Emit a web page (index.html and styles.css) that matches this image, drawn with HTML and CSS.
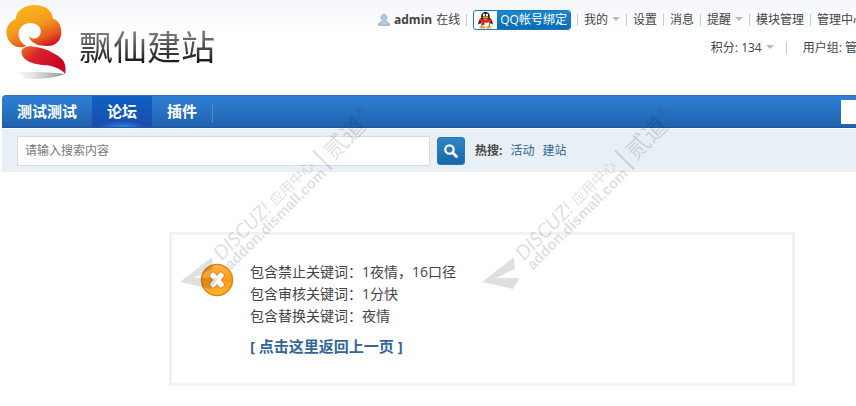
FILE: index.html
```
<!DOCTYPE html>
<html lang="zh">

<head>
  <meta charset="UTF-8">
  <meta name="viewport" content="width=device-width, initial-scale=1.0">
  <title>飘仙建站</title>
  <link rel="stylesheet" href="styles.css">
</head>

<body>
  <div class="wp">
    <!-- 头部 -->
    <header class="header">
      <a href="#" class="logo">
        <svg class="logo-mark" width="64" height="76" viewBox="12 9 192 228" aria-hidden="true">
          <defs>
            <linearGradient id="cloud" x1="0.2" y1="0" x2="0.75" y2="1">
              <stop offset="0" stop-color="#fbb91c" />
              <stop offset="0.5" stop-color="#f49a1e" />
              <stop offset="0.8" stop-color="#e4581d" />
              <stop offset="1" stop-color="#c8101f" />
            </linearGradient>
            <linearGradient id="tail" x1="0" y1="0" x2="0.9" y2="0.6">
              <stop offset="0" stop-color="#f0761c" />
              <stop offset="0.4" stop-color="#d8262a" />
              <stop offset="1" stop-color="#c80526" />
            </linearGradient>
            <linearGradient id="shade" x1="0" y1="0" x2="1" y2="0">
              <stop offset="0" stop-color="#ddd" stop-opacity="0" />
              <stop offset="1" stop-color="#888" />
            </linearGradient>
          </defs>
          <path d="M24 210C80 208 140 210 190 216C150 230 100 234 60 229C72 222 55 214 24 210Z" fill="url(#shade)" />
          <path d="M62 135C38 140 14 118 13 92C13 72 24 58 42 50C42 25 68 9 98 9C128 9 150 24 153 50C170 54 178 72 178 92C177 118 158 133 134 132C108 132 84 124 80 100C84 112 100 112 108 106C124 94 118 65 88 63C62 62 48 80 50 100C52 116 60 126 74 132Z" fill="url(#cloud)" />
          <path d="M86 133C70 133 58 140 58 150C62 180 100 188 135 190C160 194 180 204 190 216C192 190 190 175 165 160C145 148 130 138 86 133Z" fill="url(#tail)" />
        </svg>
        <span class="logo-text">飘仙建站</span>
      </a>

      <div class="um">
        <nav class="um-row">
          <span class="um-item user">
            <svg width="12" height="12" viewBox="0 0 12 12" aria-hidden="true">
              <path d="M6 0.5C8 0.5 9 2 8.700 4C8.500 5.500 8 6 7.500 6.600C8 8 11.500 8 11.500 11.300H0.500C0.500 8 4 8 4.500 6.600C4 6 3.500 5.500 3.300 4C3 2 4 0.500 6 0.500Z" fill="#b4cbe0" stroke="#8fadc9" />
            </svg>
            <a href="#" class="name">admin</a>
            <span>在线</span>
          </span>
          <span class="um-item">
            <a href="#" class="qq">
              <svg width="23" height="18" viewBox="0 0 23 18" aria-hidden="true">
                <ellipse cx="8.500" cy="16" rx="3" ry="1.500" fill="#f5a81c" />
                <ellipse cx="14.500" cy="16" rx="3" ry="1.500" fill="#f5a81c" />
                <path d="M11.500 1C15 1 16 3.500 15.800 7C19 10 19 13 18.500 13.500L16.500 12C16 15 14 16 11.500 16S7 15 6.500 12L4.500 13.500C4 13 4 10 7.200 7C7 3.500 8 1 11.500 1Z" fill="#222" />
                <ellipse cx="11.500" cy="12" rx="4" ry="4" fill="#fff" />
                <ellipse cx="10" cy="4" rx="1.100" ry="1.600" fill="#fff" />
                <ellipse cx="13" cy="4" rx="1.100" ry="1.600" fill="#fff" />
                <ellipse cx="11.500" cy="6.600" rx="3" ry="1" fill="#f5a81c" />
                <path d="M6 7Q11.500 10 17 7L18 10.500Q14 12 10.500 11.500V14H8V11L5 10Z" fill="#e2231a" />
              </svg>
              <span class="qq-label">QQ帐号绑定</span>
            </a>
          </span>
          <span class="um-item"><a href="#" class="drop">我的</a></span>
          <span class="um-item"><a href="#">设置</a></span>
          <span class="um-item"><a href="#">消息</a></span>
          <span class="um-item"><a href="#" class="drop">提醒</a></span>
          <span class="um-item"><a href="#">模块管理</a></span>
          <span class="um-item"><a href="#">管理中心</a></span>
        </nav>
        <div class="um-row um-credit">
          <span class="um-item"><a href="#" class="drop">积分: 134</a></span>
          <span class="um-item"><a href="#">用户组: 管</a></span>
        </div>
      </div>
    </header>

    <!-- 导航 -->
    <nav class="nav">
      <a href="#">测试测试</a>
      <a href="#" class="active">论坛</a>
      <a href="#" class="last">插件</a>
      <span class="quick"></span>
    </nav>

    <!-- 搜索栏 -->
    <form class="search">
      <input type="text" class="search-input" placeholder="请输入搜索内容" aria-label="请输入搜索内容">
      <button type="button" class="search-btn" aria-label="搜索">
        <svg width="14" height="14" viewBox="0 0 14 14" aria-hidden="true">
          <circle cx="5.500" cy="5.500" r="4.200" fill="none" stroke="#fff" stroke-width="2.200" />
          <path d="M8.500 8.500L12.500 12.500" stroke="#fff" stroke-width="2.800" stroke-linecap="round" />
        </svg>
      </button>
      <div class="hot">
        <strong>热搜:</strong>
        <a href="#">活动</a>
        <a href="#">建站</a>
      </div>
    </form>

    <!-- 提示信息 -->
    <main class="message">
      <svg class="message-icon" width="34" height="34" viewBox="0 0 34 34" aria-hidden="true">
        <defs>
          <linearGradient id="orange" x1="0" y1="0" x2="0" y2="1">
            <stop offset="0" stop-color="#f9b545" />
            <stop offset="0.5" stop-color="#f79a1c" />
            <stop offset="1" stop-color="#ffb52a" />
          </linearGradient>
        </defs>
        <circle cx="17" cy="17" r="15.500" fill="url(#orange)" stroke="#d9861c" stroke-width="1.500" />
        <path d="M13 12.500L21 21.500M21 12.500L13 21.500" stroke="#e08e20" stroke-width="7.500" stroke-linecap="round" />
        <path d="M13 12.500L21 21.500M21 12.500L13 21.500" stroke="#fff" stroke-width="5.500" stroke-linecap="round" />
      </svg>
      <div class="message-body">
        <p>包含禁止关键词：1夜情，16口径</p>
        <p>包含审核关键词：1分快</p>
        <p>包含替换关键词：夜情</p>
        <a href="#" class="back">[ 点击这里返回上一页 ]</a>
      </div>
    </main>

    <!-- 水印 -->
    <svg class="watermark watermark-left" width="200" height="200" viewBox="-3 -187 200 200">
      <g id="mark">
        <path d="M0 0L32-25L33-13L14-4L38-4L31 7Z" />
        <g transform="rotate(-45)">
          <text x="44" y="15" class="wm-brand">DISCUZ!</text>
          <text x="121" y="14" class="wm-center">应用中心</text>
          <text x="44" y="28" class="wm-url">addon.dismall.com</text>
          <path d="M186 1H188V28H186Z" />
          <text x="194" y="23" class="wm-name">贰道</text>
          <text x="244" y="9" class="wm-reg">®</text>
        </g>
      </g>
    </svg>
    <svg class="watermark watermark-right" width="200" height="200" viewBox="-3 -187 200 200">
      <use href="#mark" />
    </svg>
  </div>
</body>

</html>
```
FILE: styles.css
```
* {
  margin: 0;
  padding: 0;
  box-sizing: border-box;
}

body {
  font: 12px/20px "Open Sans", "Noto Sans CJK SC", sans-serif;
  color: #444;
  background: linear-gradient(#f4f6fa, #fff 32px) no-repeat #fff;
  padding: 0 2px;
  overflow-x: hidden;
}

a {
  color: #444;
  text-decoration: none;
}

.wp {
  position: relative;
  min-width: 960px;
  max-width: 1200px;
  margin: 0 auto;
}

/* 头部 */
.header {
  display: flex;
  justify-content: space-between;
  align-items: flex-start;
  height: 95px;
}

.logo {
  display: flex;
  padding: 5px 0 0 4px;
}

.logo-text {
  margin: 18px 0 0 9px;
  font-size: 34px;
  line-height: 48px;
  background: linear-gradient(#777 20%, #000 80%);
  -webkit-background-clip: text;
  background-clip: text;
  color: transparent;
}

.um {
  padding: 10px 97px 0 0;
}

.um-row {
  display: flex;
  justify-content: flex-end;
  align-items: center;
  white-space: nowrap;
}

.um-item {
  display: flex;
  align-items: center;
}

.um-item + .um-item::before {
  content: "";
  width: 1px;
  height: 12px;
  margin: 0 6px;
  background: #ccc;
}

.um-credit {
  padding: 8px 8px 0 0;
}

.um-credit .um-item + .um-item::before {
  margin: 0 16px 0 12px;
}

.user {
  gap: 4px;
}

.name {
  font-weight: bold;
}

.drop::after {
  content: "";
  display: inline-block;
  margin-left: 4px;
  border: 4px solid transparent;
  border-top-color: #bbb;
  border-bottom: 0;
  vertical-align: 3px;
}

.qq {
  display: flex;
  height: 20px;
  border: 1px solid #1b78bd;
  border-radius: 3px;
  background: #fff;
  overflow: hidden;
}

.qq-label {
  padding: 0 3px;
  line-height: 18px;
  color: #fff;
  background: linear-gradient(#1b87cf, #0a6bb5);
}

/* 导航 */
.nav {
  display: flex;
  align-items: center;
  height: 33px;
  border-top: 1px solid #3a74b0;
  border-bottom: 1px solid #1d579f;
  border-radius: 4px 4px 0 0;
  background: linear-gradient(#2e80d4, #2161ae);
}

.nav a {
  padding: 0 15px;
  font-size: 15px;
  line-height: 31px;
  font-weight: bold;
  color: #fff;
}

.nav .active {
  background: radial-gradient(ellipse 24px 6px at 50% 100%, #2b86e0, transparent), linear-gradient(#0b62c4, #1d4bab);
}

.nav .last::after {
  content: "";
  display: inline-block;
  width: 1px;
  height: 20px;
  margin-right: -16px;
  margin-left: 15px;
  background: #4b8fd6;
  vertical-align: middle;
}

.quick {
  width: 121px;
  height: 24px;
  margin-left: auto;
  background: #fff;
}

/* 搜索栏 */
.search {
  display: flex;
  align-items: center;
  height: 44px;
  padding: 0 15px;
  border-top: 1px solid #fff;
  background: #e8eff5;
}

.search-input {
  width: 413px;
  height: 30px;
  padding: 0 7px;
  border: 1px solid #d3dde4;
  background: #fff;
  font: inherit;
  color: #444;
}

.search-input::placeholder {
  color: #777;
}

.search-btn {
  display: flex;
  align-items: center;
  justify-content: center;
  width: 28px;
  height: 28px;
  margin: 0 10px 0 7px;
  border: 1px solid #2a78b3;
  border-radius: 3px;
  background: linear-gradient(#2f86c4, #1668a8);
}

.hot {
  display: flex;
  gap: 8px;
}

.hot a {
  color: #336699;
}

/* 提示信息 */
.message {
  display: flex;
  gap: 16px;
  width: 626px;
  margin: 60px auto 20px;
  padding: 26px 28px 25px;
  border: 3px solid #f2f2f2;
  font-size: 14px;
  line-height: 22px;
}

.message-icon {
  margin-top: 2px;
}

.back {
  display: inline-block;
  margin-top: 8px;
  font-size: 15px;
  font-weight: bold;
  color: #336699;
}

/* 水印 */
.watermark {
  position: absolute;
  top: 95px;
  fill: #000;
  opacity: 0.12;
  pointer-events: none;
}

.watermark-left {
  left: 175px;
}

.watermark-right {
  left: 477px;
}

.wm-brand {
  font: italic 20px Lato, sans-serif;
}

.wm-center {
  font: 14px "Noto Sans CJK SC", sans-serif;
}

.wm-url {
  font: bold 15px "Liberation Sans", sans-serif;
}

.wm-name {
  font: 24px "Noto Sans CJK SC", sans-serif;
}

.wm-reg {
  font: 10px "Liberation Sans", sans-serif;
}
```
